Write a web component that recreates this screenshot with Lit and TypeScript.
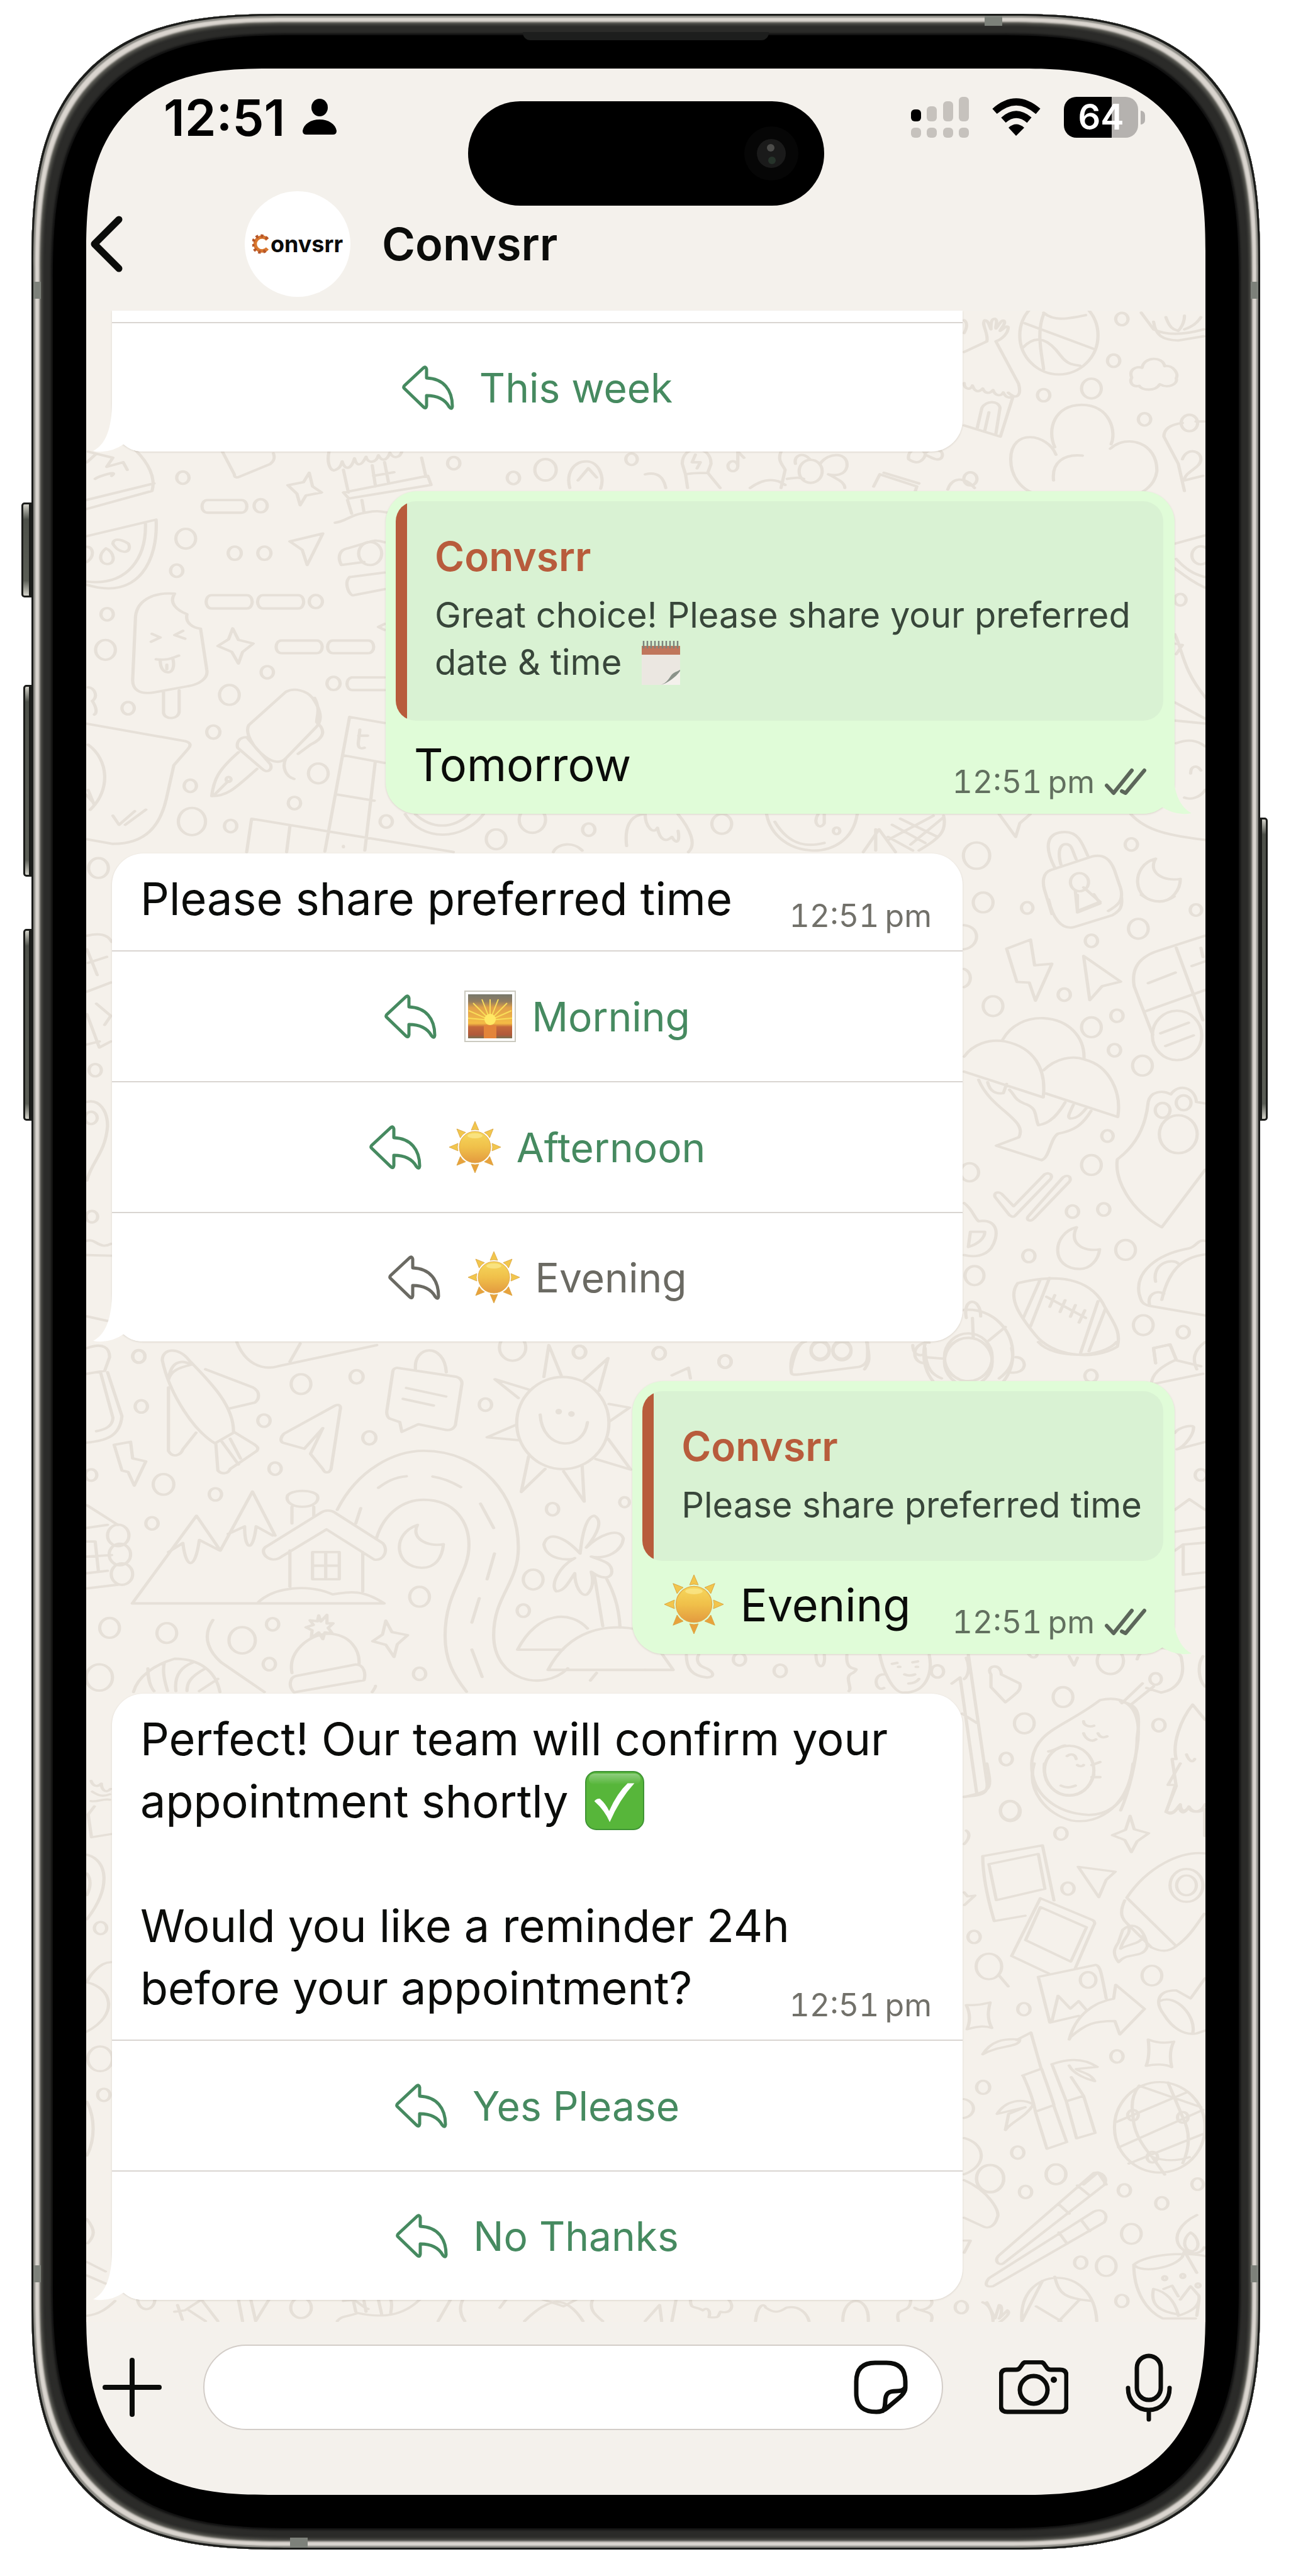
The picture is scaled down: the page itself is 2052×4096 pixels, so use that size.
import { LitElement, html, svg, css, nothing } from 'lit';
import { property, customElement } from 'lit/decorators.js';

type Dot = [number, number, number];

interface Tile {
   x: number;
   y: number;
   sy: number;
   dots: Dot[];
   paths: string;
}

interface Choice {
   label: string;
   emoji?: string;
   used?: boolean;
}

// line art of the wallpaper, one tile per area of the chat
const TILES: Tile[] = [
   {
      x: 1026, y: 0, sy: 0.4804,
      dots: [[1158, 1056, 15], [1138, 1194, 15], [1084, 1286, 24], [968, 1308, 15], [1213, 1388, 15], [1322, 1400, 20], [1005, 1110, 95]],
      paths: `M922 1070L1090 1155M968 1040c-18 60-5 130 0 182M918 1150c35-50 65-20 90 25c18 32 30 32 48 35M968 1035c25 30 60 20 102 8
         M1182 1250c-8-25 10-40 25-33c5-38 50-38 55-5c20-5 35 25 28 40c5 20-20 35-40 20c-10 25-45 20-50 5c-15 5-25-10-18-27z
         M775 1165l55-35c5-25-15-60-5-70c10 0 12 25 15 30c0-20 0-35 10-35c8 5 0 25 2 32c8-10 12-30 20-25c5 8-8 25-10 33c8-5 15-20 20-12c0 20-15 40-30 47l55 140c8 40-5 55-25 30
         M775 1268c0 20 15 25 20 8c5 20 15 25 25 10c5 15 15 20 25 5c5 20 20 22 25 8c5 15 15 22 25 12M893 1315L863 1445L775 1408M806 1420l12-70c10-25 40-25 44 0l-10 85M825 1425l10-60
         M775 1060c10 10 5 30 0 42M1205 1035l30 55c30 20 70 20 122 0M1235 1065c5 45 20 60 60 62l62-14M1265 1050c10 40 20 40 30 45c10-15 15-30 15-50M1310 1090c20-10 30-20 40-40
         M995 1480c-20-60 0-140 65-140c70 0 85 90 72 130M998 1505c-20-70-110-90-110 15c0 60 30 120 90 120M1130 1485c40-50 115-20 113 75c-5 50-40 80-72 85M992 1590c-5-60 25-88 70-82
         M1358 1395h-20M1305 1400c-30 5-45 20-45 45l35 90l15 90M1305 1520c10-40 45-30 45 0c0 30-40 40-40 70l45-15`,
   },
   {
      x: 1026, y: 711, sy: 0.4804,
      dots: [[213, 63, 12], [402, 80, 28], [186, 1247, 24], [805, 1352, 32], [821, 1507, 24], [928, 1525, 14], [1181, 1315, 15], [1300, 505, 14], [1338, 1532, 14], [790, 105, 16], [465, 1270, 8], [1350, 358, 22], [1055, 1440, 22]],
      paths: `M90 55c0-65 70-65 70 0l-8 30c-15 0-40 0-54 5zM98 90l5 45M152 85l30 50M122 25l-8 25h20l-8 20M225 60V15l15 20
         M330 15c-10 30 5 45 10 60l-10 60M345 105c25-5 30-5 40 0M365 55c-5-30 20-40 35-15M425 55c20-40 70-40 65 10c-5 30-30 30-45 25c30 20 40 30 40 45M255 135c30-30 60-35 85-10
         M0 90c30-10 45 10 50 45M570 90l90 40l-5 20M570 90l-15 40M580 85l85 35M735 140c10-40 40-45 65-5
         M640 40c-5-30 25-50 40-20c20-25 50-10 40 15c-10 15-30-5-40-10c0 10-15 40-40 15z
         M1285 320l75-28M1285 400c30 30 50 50 75 65M1290 370c20 30 40 50 70 60M1287 620c20 60 20 120 75 210M1287 845l75 55M1287 905l75 10M1285 650l20 5l-15 30
         M1290 980c30-15 50-10 70 10M1325 1080c0-25 15-30 25-10M1310 1160c20 10 40-5 50-25M1180 1215c40 60 100 70 180 85
         M0 1215c0 40 20 70 30 45c5 40 20 50 35 30c10 25 20 20 15-20M80 1215c30 50 45 100 25 125
         M295 1215c20 150 200 170 220 0M315 1240c40 90 90 80 120 70M420 1215c-15 30 5 55 15 30v-30
         M530 1340l38-75l40 75M560 1335V1265M600 1250l80 60M620 1230l90 60M590 1290l60 45M725 1225l-80 90M700 1220l-110 80M725 1220c10 60-20 80-60 115M860 1215l40 75l10-45l25-30
         M995 1392c-30-80-15-118 25-118c30 0 40 30 55 78M1010 1382c-10-50 0-68 12-68c15 0 15 20 25 50
         M985 1400l100-45c30-10 45 10 55 45l15 60c8 40-5 55-30 75M985 1400c-20 10-20 40-15 65l18 80M1045 1470l5 65l55-30l-40-48
         M1240 1362c-60 20-60 142 10 142c30 0 50-40 50-75c-40 10-80-20-60-67z`,
   },
   {
      x: 1026, y: 1423, sy: 0.4804,
      dots: [[1198, 112, 24], [1084, 152, 15], [1018, 330, 15], [845, 368, 24], [1084, 438, 24], [1146, 400, 15], [1140, 514, 15], [1208, 565, 24], [1123, 798, 14], [1084, 894, 24], [788, 918, 22], [1038, 1048, 15], [1114, 1041, 15], [932, 1195, 15], [1167, 1175, 24], [800, 1260, 23], [1210, 1424, 24], [1307, 1447, 15], [1292, 465, 60], [1257, 713, 18], [1308, 688, 18], [1295, 792, 46], [34, 1517, 15], [194, 1545, 15], [425, 1510, 22], [478, 1510, 22], [785, 1530, 58], [785, 1520, 108]],
      paths: `M980 15c10 60 30 100 60 92l95-40c20-15 25-30 22-60M1050 0v58l55-30l-15-30M1205 0c30 30 60 25 80 5
         M878 178l58-30l10 85l42-5l-40 122l-15-60l-30-2zM1065 202l90 85l-45 15l-30 46zM775 100c40 5 40 70 0 80M775 245c20 10 20 50 0 60
         M1360 135l-110 48c-50 20-70 60-62 120l45 160M1290 175l65 240M1215 385l145-70M1222 292l66-35M1328 235l32-15M1252 458l68-35M1264 500l68-35M1350 175l5 30
         M868 480c20-50 60-75 100-72c60 5 100 60 98 135M775 535c20-40 60-60 100-50c70 20 100 90 92 185l-192-85M968 580c30-40 70-50 100-35c60 20 90 110 80 190l-175-78
         M810 612c30 100 120 130 98 190l-55 28l110 48c20-10 20-70 40-88c40-10 60-30 80-75M832 620c5 30 20 40 38 36l8-30M885 645c15 20 10 30 35 45c35 15 25 40 35 72c30-5 50-40 65-75M1040 695c-10 30-15 40-8 45c15 0 25-10 40-35
         M1360 910l-105 190c-80-60-115-160-108-225c50-50 70-120 75-190c5-35 35-40 55-25c20-40 60-20 62 25l20 5
         M850 1000c-5-18 12-20 20-5l25 35l75-105c15-10 20 5 15 15l-85 120c-5 8-10 5-15 0zM930 1065l85-130c15-15 22 5 15 15l-85 120c-10 15-20 5-15-5z
         M1048 1100c-60 20-65 138 8 138c25 0 45-30 48-65c-40 10-75-20-56-73z
         M775 1020c20 20 25 50 35 60c50-10 50 50 30 90c-15 25-40 30-65 22M790 1115l35 0c0 20-15 40-40 50z
         M1360 1145c-20-5-20 20-40 25c-80 20-130 80-120 150c5 30 10 35 25 40l135 32M1240 1280c-10-60 40-80 55-60M1360 1190c-60 10-90 60-105 150M1225 1355c-5-30 15-50 35-35
         M905 1285c120-40 185 0 212 80c20 50 40 80 30 130c-60 50-160 30-200-40c-30-50-70-120-42-170zM960 1272l-42 130M982 1268l-46 160M1100 1345l-42 170M1118 1370l-40 140M975 1330l95 70M995 1325l-12 38M1020 1342l-12 38M1045 1358l-12 38M1068 1375l-14 40
         M780 1400c-10-70 35-70 35-5M795 1400l2 65M875 1430l-40 45M680 1530l45 5M680 1550c-35 0-35-70 10-68
         M355 1568c10-70 25-90 35-90M538 1480c10 60 5 70-5 90M1235 1500l40-12l15 50M1235 1500l5 50M1360 1480c-30 30-30 60-20 90`,
   },
   {
      x: 0, y: 711, sy: 0.4804,
      dots: [[445, 101, 15], [1103, 53, 15], [1248, 102, 15], [1326, 75, 26], [1535, 40, 14], [634, 194, 16], [452, 303, 24], [571, 351, 16], [643, 351, 16], [430, 409, 15], [261, 553, 15], [257, 671, 24], [768, 511, 16], [650, 745, 15], [811, 782, 16], [558, 820, 24], [312, 864, 15], [519, 943, 16], [774, 1080, 24], [463, 1121, 15], [716, 1178, 15], [467, 1239, 33], [561, 1254, 15], [240, 1393, 24], [900, 352, 28], [556, 1100, 6], [939, 1239, 15], [1294, 1233, 32], [1206, 1298, 24], [1431, 1266, 15]],
      paths: `M540 12l30 78c0 10 5 12 12 8l75-42c10-10 12-20 8-35M800 15c-5 30 0 60 12 62c15-5 18-20 20-30c5 25 20 35 30-10c5 25 15 30 28-5c5 25 25 20 30-5c8 20 20 20 28-8c8 20 25 20 30-10
         M835 75l12 75M835 150l205-55l8 30l-200 45zM905 60l8 70M935 50l10 70M908 95l50-12M1025 35l10 60M845 175l10 45M880 175l5 40M815 250c30-5 30-25 80-35c40-10 50 10 80 5
         M1385 135c-10-50 10-88 40-88c30 0 45 50 35 90M1405 110l25-40l20 30
         M212 50l20-25M232 105c10-10 60-30 40-10M215 15l60 20l-15 30l40-15l10 25M330 10c30 40 50 90 40 135l-160 60M375 120l-165 55
         M752 85l8 45l22 20l-38 10l-14 32l-8-38l-22-28l38-10zM505 175h82c18 0 18 42 0 42h-82c-18 0-18-42 0-42z
         M210 295l170-55c5 130-40 270-170 215M212 445c100 15 145-80 142-195M275 320c0-25 30-10 38 0c10 30-20 40-38 0zM258 335c20 10 25 50 5 52c-20 0-25-30-5-52zM212 330c15 0 20 30 0 50
         M705 312l80-26l-38 104l-12-50zM935 315c-20-10-30-5-40 0l-50 20c-20 5-25 30-15 55l55-10M850 430l85-15M850 430c-15 20 0 65 10 60l75-20
         M330 560c5-60 50-80 95-75c-15 30 5 55 30 68c-5 30 15 45 33 48l15 135c5 30-20 50-45 55l-80 20c-40 10-55-10-55-40zM398 810v70c5 25 38 20 38-5V805M370 618l20 12l-22 14M445 608l-20 14l25 12M380 702c30 5 40-5 55-12M390 705c0 30 10 42 22 40c12-5 12-30 8-48M406 720v15
         M515 490h85c18 0 18 44 0 44h-85c-18 0-18-44 0-44zM640 490h85c18 0 18 44 0 44h-85c-18 0-18-44 0-44zM685 640h85c18 0 18 42 0 42h-85c-18 0-18-42 0-42zM810 640h85c18 0 18 42 0 42h-85c-18 0-18-42 0-42zM935 762h-80c-15 5-15 38 0 42h80
         M566 600l14 38l36 12l-26 28l-10 38l-16-38l-34-20l26-22zM935 585l-15 10l15 10
         M605 920l90-110c20-15 50-5 65 20c20 40 25 70 10 95l-75 105c-15 20-35 10-50-5c-30-30-50-80-40-105zM765 830c15 40 5 60 5 80l10 15c15 30-10 50-25 60l-30 30
         M600 960c-20 0-25 20-22 35l60 70c10 15 25 5 20-15zM580 1010c-50 60-60 90-65 145c40 0 60-30 110-90M555 1105l-35 48M695 1030c-10 30 0 60 20 68
         M850 893l85 20M850 893l-60 445M935 1045l-100-25M910 1170l-90-20M912 1045l-25 290M875 935l-4 45c0 15 5 20 15 15M872 955l22 0
         M210 915l240 58c15 5 15 15 8 25l-35 55l-18 110c-15 90-50 150-130 150l-62-15M215 985c50 50 55 150 5 215M215 1135l15 50M210 1150l20 30M275 1220l15 30l38-45M305 1250l50-50M215 795c15 0 25 30 10 45c10 20 12 40 5 45
         M600 1340l12-110l490 110M705 1255l-8 85M985 1215c40 90 140 90 190 0M1010 1215c40 50 90 50 130 0M1568 1215c-40 0-50 50-45 105M1345 1340c10-30 50-35 70-5M835 1320v4`,
   },
   {
      x: 0, y: 1423, sy: 0.4804,
      dots: [[232, 580, 15], [222, 738, 15], [224, 1065, 14], [338, 1528, 15], [1408, 1513, 15]],
      paths: `M212 135c30-10 50-5 60 20M212 180l25 85M215 225l45-20M212 320l58-30M235 360l35 40l-15 30M212 395l30 110l28-20M212 495l30-10
         M212 685c30-10 50 30 50 80c-5 90-40 120-50 180M212 1145c20-10 30 30 58 10M212 1192l58 2M212 1395l50 15`,
   },
   {
      x: 0, y: 2134, sy: 0.4804,
      dots: [[338, 47, 15], [344, 213, 15], [732, 139, 24], [867, 115, 16], [642, 260, 15], [898, 317, 16], [669, 419, 15], [398, 471, 25], [524, 504, 15], [370, 600, 15], [222, 440, 14], [1409, 33, 15], [1246, 18, 32], [1180, 207, 15], [1343, 553, 15], [1296, 786, 24], [1272, 889, 15], [1020, 843, 24], [1368, 268, 112], [267, 946, 24], [406, 963, 24], [663, 934, 15], [589, 987, 32], [655, 1066, 15], [1020, 1098, 15], [242, 1110, 32], [288, 640, 26], [292, 703, 26], [297, 768, 26], [1358, 230, 4], [1389, 238, 4], [1518, 530, 12]],
      paths: `M395 60c0-40 40-45 65 0c50 70 110 150 108 240l-45 35c-50-40-110-160-128-275zM410 125c5-60 30-70 55-50c-30 10-50 20-55 50zM500 90l115 60c20 15 15 40 5 50l-62 20M410 150v210c10 25 30 15 35-5l32-55
         M525 335l5 90c10 15 25 10 30-5l65-60c5-10 0-15-5-20l-50-42M540 330l40 75M560 320l25 65M815 210c10-5 15 0 12 15l-22 195c-5 15-15 15-20 0l-30-50l30-85l-45 68l-52-20c-8-5-5-20 3-30z
         M965 85l145 30c10 5 15 15 12 30l-15 130c-5 15-15 18-25 15l-65-18l-40 25l-5-32l-25-12c-5-5-8-15-6-30l14-125c0-8 5-12 10-13zM1010 90c-5-80 70-90 75 10M988 152l96 28M980 188l74 22
         M1322 115l12-105l30 100M1420 125l58-72l-22 108M1480 205l50 12l-48 45M1478 320l55 102l-85-35M1415 410l5 118l-50-100M1325 420l-58 76l18-118M1262 325l-78-10l72-42M1260 185l-57-62l85 35M1313 240c5 120 105 125 115 25
         M278 340l40-10l5 55l32 10l-28 80l-15-45l-15-5zM212 20c40-20 55 0 55 30l-12 45l-43 10M245 100l30 150c0 30-20 40-40 45M262 100l35 145c-5 70-40 80-85 88M576 0c20 70 60 95 100 80l240-70M705 65l25-60
         M322 865L478 575l58 115l78-195l55 145M322 865h612c-50-45-80-40-125-30c-60-35-140-25-180 25M410 695l35-30c8 90 30 90 40-10l50 35M555 635l40-25c0 80 20 90 28 0l40 30M705 690v120M882 695v130
         M650 675l130-110c10-10 25-10 35 0l115 100c15 20 5 60-20 55L794 620L685 710c-30 30-60-20-35-35zM698 515c0-30 75-30 75 0c0 40-75 40-75 0zM710 545v55M763 545v30M760 695h65v90h-65zM792 695v90M760 740h65
         M820 555C870 420 960 360 1030 360c140 0 230 150 230 320c0 120-60 160-60 290c0 150 120 190 180 110M915 650c20-90 70-128 115-128c80 0 110 80 110 150c0 100-58 150-58 300c0 80 20 130 52 185
         M865 600l12-50M920 482c20-20 40-35 68-38M1052 445c25 5 50 20 68 35M1168 535l32 80M1202 700l-18 85M1165 848l-18 80M1147 1018l25 90M1435 1120l15-25
         M1015 605c-65 30-55 140 10 142c35 0 50-35 53-78c-40 10-80-20-63-64z
         M1410 700c-40-60-80-75-88-30c5 50 60 55 75 45c-40 30-60 90-45 110c20 0 30-30 45-60c0 40 15 80 30 70c15-20 15-50 10-75c30 30 50 20 50 0c0-30-20-35-50-50c40 10 75-20 78-60c-10-40-60-10-90 30c30-50 40-90 20-105c-20 0-30 60-35 125z
         M1445 775l20 165M1475 785c20 50 30 100 32 160M1258 1018c50-130 130-130 170-70M1258 1018h110M1332 1085c50-130 140-160 230-130M1332 1085h236
         M212 540l75 65M212 615l50-10M212 660l20 0l8 100M212 765l50-8M212 815l75-12M212 710l60-5
         M518 920c-30 60-5 110 20 140l105 98M325 1158c10-50 50-90 100-110c60 0 100 40 110 110M360 1080c0 30 5 60 15 75M400 1060c-5 30 0 60 8 95M470 1060c-40 20-45 60-42 95M500 1080c-40 30-45 50-45 75M530 1115l-45 40
         M710 1095c-10-70 40-125 85-130c60 0 80 60 78 100M720 1105l145-38c20 0 25 30 20 52l-170 40c-15-20-10-50 5-54zM775 905l5 20l15-22l0 28l15 0l-12 15l10 18l-18-3l-5 22l-10-22l-18 18l2-25l-15-10l18-8l-8-15l18 3z
         M938 922l15 38l38 10l-25 30l-8 42l-20-40l-32-12l24-22zM905 1158c5-10 8-15 8-20`,
   },
   {
      x: 1026, y: 2134, sy: 0.4804,
      dots: [[34, 37, 15], [194, 64, 15], [425, 25, 22], [478, 25, 22], [785, 65, 58], [229, 1050, 15], [328, 1088, 15], [710, 1090, 15], [1350, 440, 14], [1015, 1175, 24], [921, 1262, 24], [1248, 1268, 15], [877, 1380, 15], [886, 1550, 23], [1030, 1418, 60], [1130, 1055, 32], [1240, 1115, 14], [1083, 112, 15]],
      paths: `M355 100c-5-50 10-90 30-100M355 100c0 10 10 8 20 7l145-25c25-10 20-30 20-80M65 110l40-25l5 35M680 20c0 70 20 90 40 100M890 20c10 50-10 80-30 100M650 10c0 25 10 40 30 30M900 50c30 0 30 60-15 50M955 0c40 60 160 50 190 0M1235 20l40-12l15 50c-50 30-60 60-60 80M1235 20l5 50M1230 140l125-35M1290 60l60 20
         M1287 300c10-20 50-30 45-15c0 20-20 60-40 70l70-25M1287 555l35-35l38 35M1287 628l75-15M1287 690l20-20v100l55-8M1308 670l52-6M1287 825l75-15
         M40 1030l28 55H0M100 1035c0 40 10 70 50 75c20 0 20-20-10-35c-15-10-15-30-10-40M415 1035c0 50 25 50 20 0M490 1035c-5 70 40 30 15 60c-25 10 0 50-10 60M570 1035c5 40 30 130 60 125c50 0 70-60 60-125M580 1100c-30 0-20 60 0 45M600 1065l12-3M650 1060l12-3M615 1075h4M658 1075h4M630 1100c8 5 15 5 25 0M640 1130c10 0 20-5 25-15
         M785 1035l45 420c5 40-10 45-55 50M745 1130l20-20l40 380M780 1045c10 30 5 60-5 70M770 1230l35 30
         M840 1100c-15-30 25-40 25 0l45 30c5 20-5 30-35 62l-35-50zM930 1030c10 20 20 15 22 5M1030 1040l12 30l8-25
         M1105 1185c50-15 85 10 92 80c5 60-10 130-20 190c-15 80-60 110-100 110c-80-5-140-70-138-170c5-110 80-120 166-210zM1155 1190c40 10 50 30 40 120c0 70-20 180-40 240
         M1158 1195l50-65M1180 1200l55-60M1195 1050c10-60 110-40 108 0c10 60-10 100-50 110l-35-15M1065 1255c0 15 15 20 25 15M1065 1295c5 20 20 30 30 20M1100 1295c5 15 15 15 22 10M980 1355c20-5 30-20 40-20M1085 1400l20-10M1085 1440l20 0M1010 1468c15 10 25 5 35 0M1025 1370c10-10 20-5 22 10M1050 1400c5 5 12 5 15 0
         M1360 1250l-30-50c-30 50-50 130-40 180h-10l10 90l-25 85c20 10 25-10 35-25c0 20 10 30 20 10c5 20 30 20 40-10M1315 1365c5 20 15 30 20 15M1355 1040c-15 30-10 80 5 100`,
   },
   {
      x: 1026, y: 2804, sy: 0.427,
      dots: [[887, 178, 24], [1010, 261, 15], [1027, 466, 15], [799, 646, 15], [835, 756, 31], [920, 915, 15], [1076, 806, 19], [1231, 790, 24], [1315, 454, 40], [1315, 454, 24], [1146, 1091, 15], [821, 1206, 16], [905, 1449, 15], [998, 1530, 24], [1250, 1355, 110], [1185, 1310, 13], [1306, 1318, 13], [1232, 1466, 13], [838, 1545, 33]],
      paths: `M945 0c-20 100 30 190 90 212c70 20 140-60 150-212M970 0c-5 60 20 120 60 120c30 0 50-30 60-80M1178 195l10 50l35 15l-28 30l-14 40l-16-45l-30-18l32-20zM1270 80l30-80M1270 80l18 0l-22 100c10 15 20 5 30-20c5 30 15 30 25 0c5 15 20 30 38 10V270M830 0c10 80 15 100-30 115l-25 10
         M820 345l145-40l28 205M820 345c0 100 20 200 28 242l75-20M835 375l120-38l16 130l-118 42zM960 502l125 80c8 5 8 15 5 20l-45 160M960 502l-70 215l90 65M960 535l112 75l-38 128l-110-80z
         M955 795l140-45c10 5 12 20 25 125M955 795l28 170l70-25M988 960l15-95l30 48l20-28l20 35M1030 1028c15-90 60-140 108-152l5-52l70 90l-60 95l-12-50c-50 0-70 10-108 60zM860 790l22 40
         M1052 385l90 18l-22 30l-18 65zM775 480l8 15l18-3l-25 35M780 250c10 10 8 30-5 50
         M1360 335c-60-10-140 50-190 165l120 180c30-30 50-80 68-120M1165 510c-15 50-5 70 5 85l60 90c20 15 40 20 60-5M1160 620c20-30 50-20 60 60c-10 50-50 20-70 60c-20-40-5-60 0-75zM1175 610c5 30-15 40-20 80c20-20 50-15 55-50
         M1360 800l-35 75l-35-30c-50 0-50 50-30 90c20 50 50 80 80 70l20-10M1250 885c40-30 90 60 80 120
         M780 900c20 0 30 0 58-10c-5 30-8 60 4 95c-15-8-30-8-60 5c8-30 8-60-2-90zM1222 1028c20 12 40 15 62 8c-10 30-10 60-5 95c-15-12-40-12-62-5c8-30 8-60 5-98z
         M902 1030l35-28l25 135l-45 25M918 1162c15 50 25 90 30 135l45-25c-10-50-20-90-30-135M948 1297l28 138l48-25l-32-138M820 1083c20-50 50-60 90-55c0 30-50 20-90 55zM988 1120c30-15 70-30 110 10M988 1120l35 138l42-20l-30-70M1023 1258l25 138l45-20l-28-138M1030 1125c10 30 40 50 62 58c-10-30-30-30-45-45l50-8M855 1305c20-50 60-60 88-35c-20 50-50 60-68 95l8-60l40-25z
         M1200 1200l150 80M1145 1335l170-110M1150 1430l205-140M1175 1490l180-110M1185 1310c-5-40 0-80 15-110M1185 1310c0 60 20 110 47 156l30 65M1306 1318l-36-130M1306 1318c20 60 15 120 0 170M1232 1466c40 20 70 10 90 0
         M775 1250c30 10 30 60 0 70M775 1395c50 20 60 100 0 135M1065 1568l35-45l20 45`,
   },
   {
      x: 0, y: 2804, sy: 0.427,
      dots: [[245, 613, 15], [244, 1100, 30], [253, 1234, 15]],
      paths: `M222 65c5 20 15 25 25 10c0 20 10 40 22 20M225 105c15 15 25 20 42 10M222 140c15 5 30-10 45-5M230 160l-15 30l8 85l47-12M212 340c50 20 60 120 0 240M212 410c10 20 10 50 0 80M270 740c-30 0-55 60-58 75c60 20 80 120-2 185M212 1260c20 60 20 140 0 200`,
   },
   {
      x: 1026, y: 3426, sy: 0.427,
      dots: [[838, 90, 33], [998, 73, 24], [924, 139, 15], [1164, 133, 15], [1255, 181, 15], [1181, 295, 24], [1342, 110, 14], [1058, 402, 15], [1120, 415, 24], [1158, 545, 15], [768, 568, 15], [1262, 460, 5], [1306, 452, 5], [1343, 487, 5]],
      paths: `M775 95c60 40 90 120 80 140c-5 30-20 40-30 35l-50-35M1090 68c20-8 35 20 25 45L870 405c-12 10-22-10-12-28zM1090 212c20-15 38 10 25 40L845 490c-20 5-20-10-10-30zM1050 115l28 35M1005 185l25 35M1060 245l20 40M1005 290l20 42
         M1187 410c30-40 130-50 180-30M1187 410c20 35 100 10 118-30l5-20M1187 410c0 100 30 170 70 200h80M1340 225c-40 30-60 80-40 120c20 30 50 30 58 0M1325 290c-20 20-20 70 5 70c20-10 15-50-5-70M1310 360l30 80M1235 500c30 10 50 40 60 95c-40-10-70-30-60-95zM1260 500l20-12l15 40M1300 540l25-50l20 35c5 40-20 60-50 75M1345 545l-5 55
         M915 620c-10-210 175-220 182 0M915 620l50-150M950 565l60 55M995 455c10 60 20 80 90 90M1005 620l50-80M820 550c20 10 25 50 25 70M830 550l20 60l10-50c10 0 5 40 0 50l20-30c10 10-10 35-20 45
         M110 540c0 40 10 20 30 40c10-15 20 0 15 25c30 5 20-5 28-20c25 10 35-20 20-45M268 620c5-60 20-70 25-50c20 20 30 20 50 0c30-10 50 20 55 50M480 620c0-100 65-100 62 0M615 620c-10-60 30-20 30-80M695 540c10 30-30 50-40 30c20 20 50 10 40 50M0 620l35-60l5 60M75 540l-10 80M775 320h15l-15 45`,
   },
   {
      x: 0, y: 3426, sy: 0.427,
      dots: [[732, 570, 25]],
      paths: `M212 240c20 40 20 60 2 90M212 400l45 35M212 450l45 30M280 545c-20 30-40 50-68 55M335 540c5 50 40 45 42 0M425 585l25-5l35-35M432 560l12 55M460 580l40 40M490 540l40 80M580 540l10 80M610 540l12 80l32-80
         M820 620c10-20 20-15 50-30c60 20 110 10 150-50M835 545c40-10 30 10 60 30M860 550l5 35M885 545l5 40M920 540l8 55M950 540c5 20 0 40 0 50M1095 540l-30 80M1125 540c-10 30-5 60 5 80M1275 620c60-90 100-100 142 0M1320 540l50 25l30-25M1440 540c-10 40 10 60 25 80M1215 570l15-30`,
   },
];

const SX = 0.6543;

function wallpaper() {
   return html`
      <svg class="wallpaper" viewBox="137 494 1780 3198" preserveAspectRatio="xMidYMin slice" aria-hidden="true">
         ${TILES.map(t => svg`
            <g transform="translate(${t.x} ${t.y}) scale(${SX} ${t.sy})">
               ${t.dots.map(d => svg`<ellipse cx=${d[0]} cy=${d[1]} rx=${d[2]} ry=${d[2] * SX / t.sy}/>`)}
               <path d=${t.paths}/>
            </g>`)}
      </svg>`;
}

const replyIcon = html`
   <svg class="reply" viewBox="0 0 83 72" aria-hidden="true">
      <path d="M3 37q-1-2 1-4L34 5q4-3 5 2V21C66 22 80 40 80 66q-1 6-5 1C69 56 58 49 39 49V65q-1 6-5 2z"/>
   </svg>`;

const ticks = html`
   <svg class="ticks" viewBox="0 0 66 44" role="img" aria-label="Delivered">
      <path d="M3 28L14 40L43 4M27 37L33 40L63 4"/>
   </svg>`;

const tail = html`
   <svg class="tail" viewBox="0 0 80 80" aria-hidden="true">
      <path d="M30 0C30 42 20 68 0 78Q26 83 49 67Q58 78 78 79V0z"/>
   </svg>`;

function emoji(name: string) {
   switch (name) {
      case 'sun':
         return html`
            <svg class="emoji" viewBox="0 0 82 82" role="img" aria-label="sun">
               <defs>
                  <linearGradient id="sun" x2="0" y2="1">
                     <stop offset="0" stop-color="#f6d75c"/><stop offset=".5" stop-color="#f0c04a"/><stop offset="1" stop-color="#e39a3f"/>
                  </linearGradient>
               </defs>
               ${[0, 45, 90, 135, 180, 225, 270, 315].map(a => svg`
                  <path d="M41 0L47 14Q41 12 35 14z" fill=${a > 90 && a < 270 ? '#e8a23c' : '#f2c64d'} stroke="#d9a440" stroke-width=".8" transform="rotate(${a} 41 41)"/>`)}
               <circle cx="41" cy="41" r="25" fill="url(#sun)" stroke="#e2a945"/>
               <ellipse cx="41" cy="23" rx="12" ry="4" fill="#fbe990" opacity=".7"/>
            </svg>`;
      case 'sunrise':
         return html`
            <svg class="emoji" viewBox="0 0 82 82" role="img" aria-label="sunrise">
               <defs>
                  <linearGradient id="sky" x2="0" y2="1">
                     <stop offset="0" stop-color="#77786b"/><stop offset=".16" stop-color="#8f7c60"/><stop offset=".3" stop-color="#e0a04a"/><stop offset=".66" stop-color="#f4bb45"/>
                     <stop offset=".74" stop-color="#c4683a"/><stop offset=".92" stop-color="#b0593a"/><stop offset="1" stop-color="#77704f"/>
                  </linearGradient>
               </defs>
               <path d="M1 1h80v80H1z" fill="#fff" stroke="#cbcac0" stroke-width="2"/>
               <path d="M6 6h70v70H6z" fill="url(#sky)"/>
               <path d="M41 47L6 44M41 47L7 32M41 47L14 20M41 47L28 14M41 47V14M41 47L54 14M41 47L68 20M41 47L75 32M41 47L76 44" stroke="#f9dd58" stroke-width="2"/>
               <path d="M31 55h20v21H31z" fill="#e3843a"/>
               <circle cx="41" cy="46" r="9" fill="#ffe865"/>
            </svg>`;
      case 'notepad':
         return html`
            <svg class="emoji pad" viewBox="0 0 62 70" role="img" aria-label="notepad">
               <path d="M0 8h61v62H0z" fill="#ebe7e1"/>
               <path d="M0 8h61v14H0z" fill="#c0765c"/>
               <path d="M3 0v12M9 0v12M15 0v12M21 0v12M27 0v12M33 0v12M39 0v12M45 0v12M51 0v12M57 0v12" stroke="#7d837b" stroke-width="2.5"/>
               <path d="M61 46C54 50 50 50 46 56C42 62 38 68 30 70H61z" fill="#f4f1ec"/>
               <path d="M61 46C54 50 50 50 46 56C42 62 38 68 30 70C40 68 54 58 61 48z" fill="#8b938a"/>
            </svg>`;
      default:
         return html`
            <svg class="emoji" viewBox="0 0 96 96" role="img" aria-label="check mark">
               <defs>
                  <linearGradient id="gloss" x2="0" y2="1">
                     <stop offset="0" stop-color="#8fce7f"/><stop offset="1" stop-color="#57b63a"/>
                  </linearGradient>
               </defs>
               <rect x="1" y="1" width="94" height="94" rx="17" fill="#57b63a" stroke="#3f9434" stroke-width="2"/>
               <rect x="6" y="4" width="84" height="18" rx="9" fill="url(#gloss)"/>
               <path d="M15 49Q19 44 24 45Q34 54 39 65Q52 36 69 20H80Q56 46 40 83Q32 64 15 49z" fill="#fff"/>
            </svg>`;
   }
}

@customElement('chat-message')
export class ChatMessage extends LitElement {
   @property({ type: Boolean, reflect: true }) outgoing = false;
   @property({ type: Boolean, reflect: true }) cut = false;
   @property({ attribute: false }) text: unknown = nothing;
   @property({ attribute: false }) quote: unknown = nothing;
   @property({ attribute: false }) choices: Choice[] = [];

   static styles = css`
      :host {
         display: block;
         position: relative;
         box-sizing: border-box;
         width: 76%;
         margin-left: 41px;
         align-self: flex-start;
         border-radius: 50px;
         background-color: #fff;
         box-shadow: 0 1px 3px rgba(80, 60, 40, 0.16);
      }
      :host([cut]) {
         border-radius: 0 0 50px 50px;
         padding-top: 18px;
      }
      :host([outgoing]) {
         width: auto;
         max-width: 1254px;
         margin-left: 0;
         margin-right: 49px;
         align-self: flex-end;
         background-color: #e0fcd8;
      }
      .tail {
         position: absolute;
         left: -30px;
         bottom: -1px;
         width: 80px;
         height: 80px;
         fill: #fff;
      }
      :host([outgoing]) .tail {
         left: auto;
         right: -27px;
         transform: scaleX(-1);
         fill: #e0fcd8;
      }
      .body {
         display: grid;
         padding: 22px 49px 25px 45px;
      }
      :host([outgoing]) .body {
         padding: 20px 45px 21px 45px;
      }
      .text, .meta {
         grid-area: 1 / 1;
         position: relative;
      }
      .text {
         margin: 0;
         padding-bottom: 8px;
         font-size: 72px;
         line-height: 99px;
         color: #0b0c0a;
      }
      .meta {
         display: flex;
         gap: 16px;
         align-items: center;
         align-self: end;
         justify-self: end;
         font-size: 50px;
         line-height: 60px;
         font-variant-numeric: tabular-nums;
         color: #72716a;
      }
      :host([outgoing]) .meta {
         color: #62705f;
      }
      .ticks {
         width: 66px;
         height: 44px;
         fill: none;
         stroke: #5c665a;
         stroke-width: 6;
         stroke-linecap: round;
         stroke-linejoin: round;
      }
      .quote {
         margin: 0 18px 0 16px;
         padding: 48px 34px 51px 62px;
         border-radius: 32px;
         background: linear-gradient(90deg, #b85c3c 18px, #d9f2d3 18px);
      }
      .frame {
         padding-top: 16px;
      }
      .author {
         margin: 0 0 16px;
         font-size: 64px;
         line-height: 80px;
         font-weight: 600;
         color: #b85c3c;
      }
      .quoted {
         margin: 0;
         font-size: 56px;
         line-height: 75px;
         color: #38463a;
      }
      .choice {
         display: flex;
         width: 100%;
         height: 208px;
         box-sizing: border-box;
         align-items: center;
         justify-content: center;
         border: none;
         border-top: 2px solid #d9d5d1;
         background: none;
         padding: 0;
         font-family: inherit;
         font-size: 64px;
         color: #468a60;
         position: relative;
      }
      .choice:last-of-type {
         height: 206px;
      }
      .choice.used {
         color: #6b6a63;
      }
      .reply {
         width: 83px;
         height: 72px;
         margin-right: 40px;
         fill: none;
         stroke: currentColor;
         stroke-width: 5;
         stroke-linejoin: round;
      }
      .emoji {
         width: 94px;
         height: 94px;
         margin: 0 6px;
         vertical-align: -20px;
      }
      .choice .emoji {
         width: 82px;
         height: 82px;
         margin: 0 25px 0 4px;
      }
      .emoji.pad {
         width: 62px;
         height: 70px;
         vertical-align: -22px;
         margin: 0 0 6px 16px;
      }
   `;

   render() {
      return html`
         ${tail}
         ${this.quote === nothing ? nothing : html`
            <div class="frame">
               <div class="quote">
                  <p class="author">Convsrr</p>
                  <p class="quoted">${this.quote}</p>
               </div>
            </div>`}
         ${this.text === nothing ? nothing : html`
            <div class="body">
               <p class="text">${this.text}</p>
               <div class="meta"><span>12:51&thinsp;pm</span>${this.outgoing ? ticks : nothing}</div>
            </div>`}
         ${this.choices.map(c => html`
            <button class="choice ${c.used ? 'used' : ''}">
               ${replyIcon}${c.emoji ? emoji(c.emoji) : nothing}<span>${c.label}</span>
            </button>`)}
      `;
   }
}

@customElement('app-root')
export class AppRoot extends LitElement {
   static styles = css`
      :host {
         display: block;
         padding: 22px 49px 43px 50px;
         background-color: #fff;
         font-family: Inter, 'Liberation Sans', sans-serif;
      }
      button {
         border: none;
         background: none;
         padding: 0;
         display: flex;
      }
      .phone {
         position: relative;
         padding: 87px;
         border-radius: 310px;
         background-color: #000;
         box-shadow: inset 0 0 0 3px #1b1c1a, inset 0 0 2px 6px #8b8a84, inset 0 0 3px 13px #dad5cf, inset 0 0 4px 17px #55554f, inset 0 0 3px 31px #2b2b29, inset 0 0 0 34px #111;
      }
      .screen {
         position: relative;
         overflow: hidden;
         border-radius: 232px;
         background-color: #f4f1ec;
      }
      @supports (corner-shape: superellipse(1.4)) {
         .phone {
            border-radius: 400px;
            corner-shape: superellipse(1.45);
         }
         .screen {
            border-radius: 290px;
            corner-shape: superellipse(1.4);
         }
      }
      /* hardware on the rim */
      .key {
         position: absolute;
         left: -13px;
         width: 14px;
         box-sizing: border-box;
         border: 3px solid #1b1c1a;
         border-right-width: 5px;
         border-radius: 5px 0 0 5px;
         background: linear-gradient(#d5d4cb, #4d5049 24px, #5a5d55 calc(100% - 24px), #d5d4cb);
      }
      .key.action { top: 777px; height: 151px; left: -16px; width: 17px; }
      .key.up { top: 1067px; height: 305px; }
      .key.down { top: 1455px; height: 305px; }
      .key.power { top: 1278px; height: 482px; left: auto; right: -12px; transform: scaleX(-1); }
      .band {
         position: absolute;
         background-color: #7d817a;
      }
      .band.side { width: 12px; height: 27px; }
      .band.left { left: 3px; }
      .band.right { right: 3px; }
      .band.high { top: 426px; }
      .band.low { bottom: 425px; }
      .band.top { top: 3px; right: 410px; width: 28px; height: 16px; }
      .band.bottom { bottom: 3px; left: 411px; width: 28px; height: 16px; }
      .speaker {
         position: absolute;
         top: 29px;
         left: 40%;
         right: 40%;
         height: 13px;
         border-radius: 0 0 12px 12px;
         background-color: #1d1e1d;
      }
      .status {
         display: grid;
         grid-template-columns: 1fr 566px 1fr;
         align-items: start;
         padding: 45px 96px 0 123px;
         height: 194px;
         box-sizing: border-box;
      }
      .clock {
         display: flex;
         align-items: center;
         gap: 28px;
         height: 64px;
         font-size: 80px;
         font-weight: 600;
         color: #000;
      }
      .person { width: 54px; height: 58px; }
      .island {
         display: flex;
         justify-content: flex-end;
         align-items: center;
         height: 166px;
         margin: 7px 13px 0 -13px;
         box-sizing: border-box;
         padding-right: 40px;
         border-radius: 83px;
         background-color: #000;
      }
      .lens { width: 88px; height: 88px; }
      .signals {
         display: flex;
         justify-content: flex-end;
         gap: 36px;
         height: 65px;
      }
      .bars { width: 92px; height: 65px; fill: #c6c2bd; }
      .bars .on { fill: #000; }
      .wifi { width: 79px; height: 65px; }
      .battery {
         display: flex;
         align-items: center;
         gap: 4px;
      }
      .charge {
         width: 118px;
         height: 65px;
         border-radius: 20px;
         background: linear-gradient(90deg, #000 64%, #b5b2af 64%);
         font-size: 56px;
         line-height: 65px;
         font-weight: 600;
         text-align: center;
         color: #fff;
      }
      .nub {
         width: 7px;
         height: 22px;
         border-radius: 0 7px 7px 0;
         background-color: #b5b2af;
      }
      .header {
         display: flex;
         align-items: center;
         height: 191px;
         box-sizing: border-box;
         padding: 0 6px 22px;
      }
      .back { margin-right: 193px; }
      .back svg { width: 53px; height: 92px; }
      .avatar {
         display: flex;
         align-items: center;
         justify-content: center;
         width: 168px;
         height: 168px;
         border-radius: 50%;
         background-color: #fff;
         margin-right: 50px;
         font-size: 36px;
         font-weight: 700;
         color: #0b0b0b;
      }
      .avatar svg { width: 28px; height: 32px; margin-right: 1px; }
      h1 {
         margin: 0;
         font-size: 72px;
         line-height: 88px;
         font-weight: 600;
         color: #0b0c0a;
      }
      .chat {
         position: relative;
         display: flex;
         flex-direction: column;
         gap: 63px;
         padding-bottom: 35px;
         overflow: hidden;
         background-color: #f5f1eb;
      }
      .wallpaper {
         position: absolute;
         inset: 0;
         width: 100%;
         height: 100%;
         fill: none;
         stroke: #e6e0d8;
         stroke-width: 8;
         stroke-linecap: round;
         stroke-linejoin: round;
      }
      .composer {
         display: flex;
         align-items: center;
         padding: 36px 53px 103px 26px;
      }
      .composer svg {
         display: block;
         fill: none;
         stroke: #0b0c0a;
         stroke-width: 7;
         stroke-linecap: round;
         stroke-linejoin: round;
      }
      .plus { width: 94px; height: 94px; }
      .field {
         display: flex;
         align-items: center;
         flex: 1;
         min-width: 0;
         height: 136px;
         box-sizing: border-box;
         margin: 0 89px 0 66px;
         padding: 0 54px;
         border: 2px solid #d3cdc8;
         border-radius: 68px;
         background-color: #fff;
      }
      .field input {
         flex: 1;
         min-width: 0;
         border: none;
         outline: none;
         background: none;
         font-family: inherit;
         font-size: 64px;
      }
      .sticker { width: 86px; height: 86px; }
      .camera { width: 110px; height: 86px; margin-right: 91px; }
      .mic { width: 74px; height: 109px; }
   `;

   render() {
      return html`
         <div class="phone">
            <i class="key action"></i><i class="key up"></i><i class="key down"></i><i class="key power"></i>
            <i class="band side left high"></i><i class="band side left low"></i>
            <i class="band side right high"></i><i class="band side right low"></i>
            <i class="band top"></i><i class="band bottom"></i>
            <i class="speaker"></i>
            <div class="screen">
               ${this.renderStatus()}
               <header class="header">
                  <button class="back" aria-label="Back">
                     <svg viewBox="0 0 53 92"><path d="M46 7L7 46L46 85" fill="none" stroke="#0b0c0a" stroke-width="11" stroke-linecap="round" stroke-linejoin="round"/></svg>
                  </button>
                  <div class="avatar">
                     <svg viewBox="0 0 28 32" role="img" aria-label="C">
                        <path d="M24 9A11 11 0 1 0 24 23" fill="none" stroke="#d9772e" stroke-width="5.5"/>
                        <path d="M24 8A13 13 0 1 0 24 24" fill="none" stroke="#b5562a" stroke-width="5" stroke-dasharray="4 4"/>
                     </svg>
                     <span>onvsrr</span>
                  </div>
                  <h1>Convsrr</h1>
               </header>
               <main class="chat">
                  ${wallpaper()}
                  <chat-message cut .choices=${[{ label: 'This week' }]}></chat-message>
                  <chat-message outgoing
                     .quote=${html`Great choice! Please share your preferred date &amp; time ${emoji('notepad')}`}
                     .text=${'Tomorrow'}></chat-message>
                  <chat-message
                     .text=${'Please share preferred time'}
                     .choices=${[
                        { label: 'Morning', emoji: 'sunrise' },
                        { label: 'Afternoon', emoji: 'sun' },
                        { label: 'Evening', emoji: 'sun', used: true },
                     ]}></chat-message>
                  <chat-message outgoing
                     .quote=${'Please share preferred time'}
                     .text=${html`${emoji('sun')} Evening`}></chat-message>
                  <chat-message
                     .text=${html`Perfect! Our team will confirm your appointment shortly ${emoji('check')}<br><br>Would you like a reminder 24h before your appointment?`}
                     .choices=${[{ label: 'Yes Please' }, { label: 'No Thanks' }]}></chat-message>
               </main>
               ${this.renderComposer()}
            </div>
         </div>
      `;
   }

   renderStatus() {
      return html`
         <div class="status">
            <div class="clock">
               <span>12:51</span>
               <svg class="person" viewBox="0 0 54 58"><ellipse cx="27" cy="14" rx="13" ry="14"/><path d="M6 57q-6 0-6-6C2 40 13 33 27 33S52 40 54 51q0 6-6 6z"/></svg>
            </div>
            <div class="island">
               <svg class="lens" viewBox="0 0 88 88">
                  <circle cx="44" cy="44" r="43" fill="#060606"/><circle cx="44" cy="44" r="23" fill="#1a1a1a"/>
                  <circle cx="43" cy="35" r="6" fill="#4c4c4a"/><circle cx="45" cy="55" r="6" fill="#26332a"/>
               </svg>
            </div>
            <div class="signals">
               <svg class="bars" viewBox="0 0 92 65">
                  <rect class="on" y="20" width="16" height="19" rx="6"/><rect x="25" y="15" width="16" height="24" rx="6"/>
                  <rect x="51" y="7" width="16" height="32" rx="6"/><rect x="76" width="16" height="39" rx="6"/>
                  <rect y="49" width="16" height="16" rx="6"/><rect x="25" y="49" width="16" height="16" rx="6"/>
                  <rect x="51" y="49" width="16" height="16" rx="6"/><rect x="76" y="49" width="16" height="16" rx="6"/>
               </svg>
               <svg class="wifi" viewBox="0 0 79 65">
                  <path d="M5 23Q39-7 74 23M19 37Q39 19 60 37" fill="none" stroke="#000" stroke-width="11"/>
                  <path d="M39 62L27 49Q39 38 52 49z"/>
               </svg>
               <div class="battery"><div class="charge">64</div><i class="nub"></i></div>
            </div>
         </div>
      `;
   }

   renderComposer() {
      return html`
         <footer class="composer">
            <button aria-label="Attach"><svg class="plus" viewBox="0 0 94 94"><path d="M47 4V90M4 47H90" stroke-width="8"/></svg></button>
            <div class="field">
               <input type="text" aria-label="Message">
               <button aria-label="Stickers">
                  <svg class="sticker" viewBox="0 0 86 86"><path d="M82 44V34C82 14 72 4 52 4H34C14 4 4 14 4 34V52C4 72 14 82 36 82Q46 82 54 75L73 59Q82 51 82 44M47 80Q50 74 50 66C50 52 56 49 68 49Q78 49 81 44"/></svg>
               </button>
            </div>
            <button aria-label="Camera">
               <svg class="camera" viewBox="0 0 110 86">
                  <path d="M12 15H27Q31 15 33 12L38 5Q40 3 43 3H66Q69 3 71 5L76 12Q78 15 82 15H97Q107 15 107 24V73Q107 82 97 82H13Q3 82 3 73V24Q3 15 12 15z"/>
                  <circle cx="55" cy="47" r="22"/><circle cx="87" cy="31" r="5" fill="#0b0c0a" stroke="none"/>
               </svg>
            </button>
            <button aria-label="Record voice message">
               <svg class="mic" viewBox="0 0 74 109"><rect x="18" y="4" width="38" height="70" rx="19"/><path d="M4 55C4 76 18 90 37 90S70 76 70 55M37 90V105"/></svg>
            </button>
         </footer>
      `;
   }
}
